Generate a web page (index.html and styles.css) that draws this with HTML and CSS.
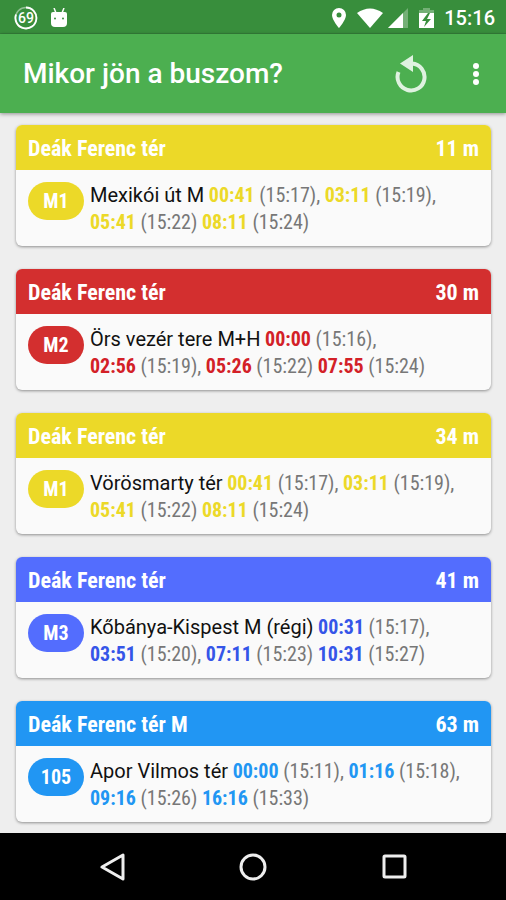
FILE: index.html
```html
<!DOCTYPE html>
<html lang="hu">
<head>
    <meta charset="UTF-8">
    <meta name="viewport" content="width=device-width, initial-scale=1.0">
    <title>Mikor jön a buszom?</title>
    <link rel="stylesheet" href="styles.css">
</head>
<body>
    <div class="status-bar">
        <svg class="percent" viewBox="0 0 24 24" width="24" height="24">
            <circle cx="12" cy="12" r="10.500" fill="none" stroke="#fff" stroke-opacity=".45" stroke-width="1.500"/>
            <path d="M12 1.500a10.500 10.500 0 1 1-10 7" fill="none" stroke="#fff" stroke-width="1.800"/>
            <text x="12" y="17" text-anchor="middle">69</text>
        </svg>
        <svg class="robot" viewBox="0 0 18 20" width="18" height="20">
            <path d="M4 0l2 5M14 0l-2 5" stroke="#fff" stroke-width="1.500"/>
            <path d="M1 6q0-2 2-2h12q2 0 2 2v9q0 4-4 4H5q-4 0-4-4z" fill="#fff"/>
            <circle cx="5" cy="10.500" r="1" fill="#388e3c"/>
            <circle cx="13" cy="10.500" r="1" fill="#388e3c"/>
        </svg>
        <div class="status-right">
            <svg viewBox="0 0 16 22" width="16" height="22">
                <path d="M8 1a7 7 0 0 0-7 7c0 5 7 13 7 13s7-8 7-13a7 7 0 0 0-7-7zm0 4.500a2.500 2.500 0 1 1 0 5 2.500 2.500 0 0 1 0-5z" fill="#fff" fill-rule="evenodd"/>
            </svg>
            <svg viewBox="0 0 26 20" width="26" height="20">
                <path d="M0 5Q13-4 26 5L13 20z" fill="#fff"/>
            </svg>
            <svg class="signal" viewBox="0 0 22 20" width="22" height="20">
                <path d="M21 0v20H1z" fill="#fff" fill-opacity=".3"/>
                <path d="M16 5v15H1z" fill="#fff"/>
            </svg>
            <svg viewBox="0 0 15 21" width="15" height="21">
                <path d="M0 6V3h4V1h7v2h4v3z" fill="#fff" fill-opacity=".3"/>
                <path d="M0 6h15v15H0z" fill="#fff"/>
                <path d="M9 6l-6 8h4l-2 6 7-8H8l3-6z" fill="#388e3c"/>
            </svg>
            <span class="clock">15:16</span>
        </div>
    </div>

    <header class="app-bar">
        <h1>Mikor jön a buszom?</h1>
        <button type="button" class="refresh" aria-label="Frissítés">
            <svg viewBox="0 0 34 38" width="34" height="38">
                <path d="M4.500 17A13.500 13.500 0 1 0 18 8.500" fill="none" stroke="#dff2e0" stroke-width="4"/>
                <path d="M6 8.500L19 0v17z" fill="#dff2e0"/>
            </svg>
        </button>
        <button type="button" class="menu" aria-label="Menü">
            <svg viewBox="0 0 8 24" width="8" height="24">
                <circle cx="4" cy="4" r="3" fill="#fff"/>
                <circle cx="4" cy="12" r="3" fill="#fff"/>
                <circle cx="4" cy="20" r="3" fill="#fff"/>
            </svg>
        </button>
    </header>

    <main class="stops">
        <section class="card yellow">
            <h2><span>Deák Ferenc tér</span><span>11 m</span></h2>
            <div class="line">
                <span class="badge">M1</span>
                <p><strong>Mexikói út M</strong> <b>00:41</b> (15:17), <b>03:11</b> (15:19),<br><b>05:41</b> (15:22) <b>08:11</b> (15:24)</p>
            </div>
        </section>
        <section class="card red">
            <h2><span>Deák Ferenc tér</span><span>30 m</span></h2>
            <div class="line">
                <span class="badge">M2</span>
                <p><strong>Örs vezér tere M+H</strong> <b>00:00</b> (15:16),<br><b>02:56</b> (15:19), <b>05:26</b> (15:22) <b>07:55</b> (15:24)</p>
            </div>
        </section>
        <section class="card yellow">
            <h2><span>Deák Ferenc tér</span><span>34 m</span></h2>
            <div class="line">
                <span class="badge">M1</span>
                <p><strong>Vörösmarty tér</strong> <b>00:41</b> (15:17), <b>03:11</b> (15:19),<br><b>05:41</b> (15:22) <b>08:11</b> (15:24)</p>
            </div>
        </section>
        <section class="card blue">
            <h2><span>Deák Ferenc tér</span><span>41 m</span></h2>
            <div class="line">
                <span class="badge">M3</span>
                <p><strong>Kőbánya-Kispest M (régi)</strong> <b>00:31</b> (15:17),<br><b>03:51</b> (15:20), <b>07:11</b> (15:23) <b>10:31</b> (15:27)</p>
            </div>
        </section>
        <section class="card bus">
            <h2><span>Deák Ferenc tér M</span><span>63 m</span></h2>
            <div class="line">
                <span class="badge">105</span>
                <p><strong>Apor Vilmos tér</strong> <b>00:00</b> (15:11), <b>01:16</b> (15:18),<br><b>09:16</b> (15:26) <b>16:16</b> (15:33)</p>
            </div>
        </section>
    </main>

    <nav class="nav-bar">
        <button type="button" aria-label="Vissza">
            <svg viewBox="0 0 28 28" width="28" height="28">
                <path d="M26 2v24L5 14z"/>
            </svg>
        </button>
        <button type="button" aria-label="Kezdőlap">
            <svg viewBox="0 0 28 28" width="28" height="28">
                <circle cx="14" cy="14" r="12"/>
            </svg>
        </button>
        <button type="button" aria-label="Áttekintés">
            <svg viewBox="0 0 28 28" width="28" height="28">
                <rect x="3" y="3" width="21" height="21" rx="1"/>
            </svg>
        </button>
    </nav>
</body>
</html>
```
FILE: styles.css
```css
* {
    box-sizing: border-box;
}

body {
    margin: 0;
    min-height: 100vh;
    display: flex;
    flex-direction: column;
    background-color: #eee;
    font-family: Roboto, sans-serif;
    color: #777;
}

h1, h2, p {
    margin: 0;
}

svg {
    display: block;
}

button {
    display: flex;
    align-items: center;
    justify-content: center;
    padding: 0;
    border: 0;
    background: none;
    cursor: pointer;
}

.status-bar {
    display: flex;
    align-items: center;
    gap: 12px;
    height: 34px;
    padding: 2px 11px 0 14px;
    background-color: #388e3c;
    border-bottom: 1px solid #34803a;
    color: #fff;
}

.percent text {
    font-size: 14px;
    font-weight: 500;
    fill: #fff;
}

.status-right {
    display: flex;
    align-items: center;
    gap: 10px;
    margin-left: auto;
}

.signal {
    margin-left: -6px;
}

.clock {
    font-size: 20px;
    font-weight: 500;
}

.app-bar {
    display: flex;
    align-items: center;
    height: 79px;
    padding: 0 12px 0 23px;
    background-color: #4caf50;
    box-shadow: 0 1px 4px rgba(0, 0, 0, 0.4);
    color: #fff;
}

h1 {
    flex: 1;
    font-size: 28px;
    font-weight: 500;
    line-height: 34px;
}

.refresh {
    width: 48px;
    height: 48px;
    margin-right: 23px;
}

.menu {
    width: 36px;
    height: 48px;
}

.stops {
    flex: 1;
    display: flex;
    flex-direction: column;
    gap: 23px;
    padding: 12px 15px 11px 16px;
}

.card {
    overflow: hidden;
    border-radius: 6px;
    background-color: #fafafa;
    box-shadow: 0 1px 3px rgba(0, 0, 0, 0.4);
}

.card h2 {
    display: flex;
    justify-content: space-between;
    padding: 11px 12px 8px;
    background-color: var(--line);
    color: #fff;
    font-family: "Roboto Condensed", Roboto, sans-serif;
    font-size: 22px;
    font-weight: 700;
    line-height: 26px;
}

.line {
    display: flex;
    gap: 6px;
    padding: 12px 12px 10px;
}

.badge {
    flex: none;
    width: 56px;
    height: 38px;
    border-radius: 19px;
    background-color: var(--line);
    color: #fff;
    font-family: "Roboto Condensed", Roboto, sans-serif;
    font-size: 20px;
    font-weight: 700;
    line-height: 39px;
    text-align: center;
}

.line p {
    font-family: "Roboto Condensed", Roboto, sans-serif;
    font-size: 20px;
    line-height: 27px;
}

.line strong {
    font-family: Roboto, sans-serif;
    font-weight: 400;
    color: #111;
}

.line b {
    color: var(--time);
}

.yellow {
    --line: #ecd928;
    --time: #ecd928;
}

.red {
    --line: #d32f2f;
    --time: #d32027;
}

.blue {
    --line: #536dfe;
    --time: #3555e8;
}

.bus {
    --line: #2196f3;
    --time: #2196f3;
}

.nav-bar {
    display: flex;
    justify-content: center;
    height: 67px;
    background-color: #000;
}

.nav-bar button {
    width: 28%;
}

.nav-bar svg {
    fill: none;
    stroke: #eee;
    stroke-width: 3;
    stroke-linejoin: round;
}
```
